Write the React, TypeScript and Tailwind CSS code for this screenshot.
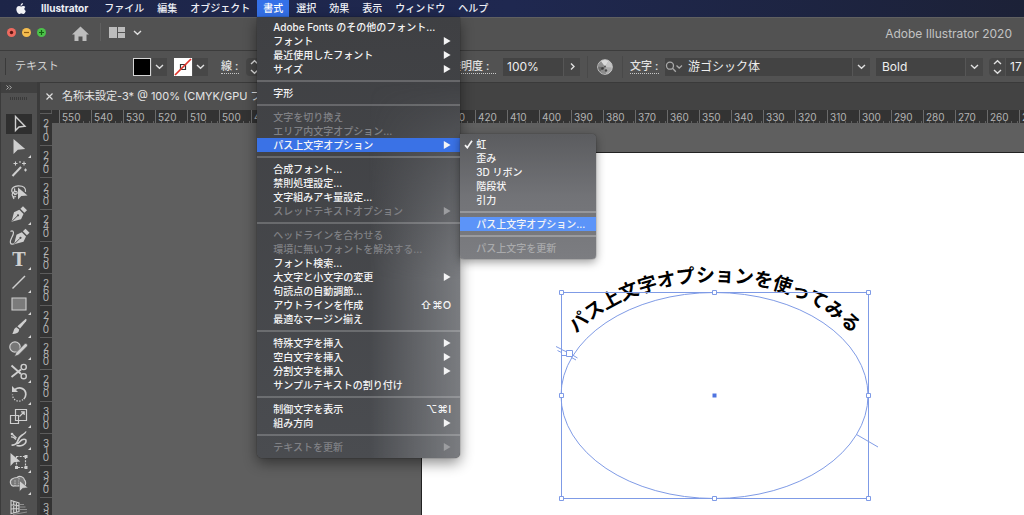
import React from "react";

type Entry = {
  label?: string;
  sub?: boolean;
  off?: boolean;
  active?: boolean;
  keys?: string;
  checked?: boolean;
};

const typeMenu: Entry[] = [
  { label: "Adobe Fonts のその他のフォント..." },
  { label: "フォント", sub: true },
  { label: "最近使用したフォント", sub: true },
  { label: "サイズ", sub: true },
  {},
  { label: "字形" },
  {},
  { label: "文字を切り換え", off: true },
  { label: "エリア内文字オプション...", off: true },
  { label: "パス上文字オプション", sub: true, active: true },
  {},
  { label: "合成フォント..." },
  { label: "禁則処理設定..." },
  { label: "文字組みアキ量設定..." },
  { label: "スレッドテキストオプション", sub: true, off: true },
  {},
  { label: "ヘッドラインを合わせる", off: true },
  { label: "環境に無いフォントを解決する...", off: true },
  { label: "フォント検索..." },
  { label: "大文字と小文字の変更", sub: true },
  { label: "句読点の自動調節..." },
  { label: "アウトラインを作成", keys: "⇧⌘O" },
  { label: "最適なマージン揃え" },
  {},
  { label: "特殊文字を挿入", sub: true },
  { label: "空白文字を挿入", sub: true },
  { label: "分割文字を挿入", sub: true },
  { label: "サンプルテキストの割り付け" },
  {},
  { label: "制御文字を表示", keys: "⌥⌘I" },
  { label: "組み方向", sub: true },
  {},
  { label: "テキストを更新", sub: true, off: true },
];

const pathMenu: Entry[] = [
  { label: "虹", checked: true },
  { label: "歪み" },
  { label: "3D リボン" },
  { label: "階段状" },
  { label: "引力" },
  {},
  { label: "パス上文字オプション...", active: true },
  {},
  { label: "パス上文字を更新", off: true },
];

function MenuRow({ entry, nested }: { entry: Entry; nested?: boolean }) {
  if (!entry.label) {
    return (
      <li role="separator" className="relative flex h-[10px] items-center">
        <span className={nested ? "h-[2px] w-full bg-white/25" : "h-[2px] w-full bg-white/20"} />
      </li>
    );
  }
  const tone = entry.off ? (nested ? "text-[#a9aaac]" : "text-[#808185]") : "text-[#f4f4f5]";
  const fill = entry.active ? (nested ? "bg-[#5c94f8]" : "bg-[#3a72e6]") : "";
  return (
    <li className="relative">
      <button
        type="button"
        disabled={entry.off}
        className={`flex h-[14px] w-full items-center justify-between pr-[9px] text-left ${tone} ${fill}`}
      >
        <span className="flex items-center">
          <span className="flex w-4 justify-center">
            {entry.checked && (
              <svg width="9" height="9" viewBox="0 0 9 9" fill="none" stroke="currentColor" strokeWidth="1.7">
                <path d="M1 5.2 3.3 7.7 8 .8" />
              </svg>
            )}
          </span>
          <span className="whitespace-nowrap">{entry.label}</span>
        </span>
        {entry.sub && (
          <svg width="8" height="8" viewBox="0 0 8 8" fill={entry.off ? "#9c9da0" : "currentColor"}>
            <path d="M.8 0 7.6 4 .8 8z" />
          </svg>
        )}
        {entry.keys && <span className="text-[11px]">{entry.keys}</span>}
      </button>
      {entry.active && !nested && (
        <ul className="absolute top-[-4px] left-full w-[136px] rounded-[4px] rounded-tl-none bg-linear-to-b from-[#5b5c5f] via-[#727377] via-50% to-[#7c7d81] pt-[3px] pb-1 shadow-[0_3px_10px_rgba(0,0,0,0.4),0_0_1px_#222]">
          {pathMenu.map((e, i) => (
            <MenuRow key={i} entry={e} nested />
          ))}
        </ul>
      )}
    </li>
  );
}

function MenuBar() {
  const before = ["ファイル", "編集", "オブジェクト"];
  const after = ["選択", "効果", "表示", "ウィンドウ", "ヘルプ"];
  const item = "h-full px-1.5 whitespace-nowrap";
  return (
    <nav className="relative z-20 flex h-[17px] shrink-0 items-center gap-px bg-linear-to-r from-[#1d2548] via-[#1f2850] via-50% to-[#1c2137] text-[10px] font-medium text-[#eef0f6]">
      <button type="button" aria-label="Apple" className="flex w-[34px] justify-end pr-2">
        <svg width="10" height="12" viewBox="0 0 20 24" fill="#f2f3f7">
          <path d="M13.8 0c.2 1.500-.4 2.900-1.200 3.900-.9 1-2.200 1.800-3.500 1.700-.2-1.400.5-2.900 1.200-3.700C11.200.9 12.700.1 13.800 0zM18.600 8.200c-2.900 1.800-2.500 6.300.9 7.700-.7 2.100-2.500 6-4.900 6.100-1.400 0-1.900-.9-3.900-.9s-2.500.9-3.800.9C3.700 22.100.5 16.400.7 12 .9 8.400 3.300 6.200 6 6.200c1.700 0 3.100 1 4.300 1s2.600-1.200 4.700-1.100c1.500.1 2.800.8 3.600 2.100z" />
        </svg>
      </button>
      <button type="button" className="h-full pr-[9px] pl-1.5 font-bold">Illustrator</button>
      {before.map((t) => (
        <button type="button" key={t} className={item}>{t}</button>
      ))}
      <div className="relative h-full">
        <button type="button" aria-expanded="true" className="h-full bg-[#3470e8] px-1.5 text-white">書式</button>
        <ul className="absolute top-full left-0 w-[203px] rounded-b-[5px] bg-linear-to-b from-[#3f4043] to-[#4a4c50] pt-[3px] pb-1 shadow-[0_5px_14px_rgba(0,0,0,0.45),0_0_1px_#111]">
          <li aria-hidden="true" className="absolute inset-0 rounded-b-[5px] bg-linear-to-r from-transparent from-55% to-[#7a7c80] mask-t-from-40% mask-t-to-85%" />
          {typeMenu.map((e, i) => (
            <MenuRow key={i} entry={e} />
          ))}
        </ul>
      </div>
      {after.map((t) => (
        <button type="button" key={t} className={item}>{t}</button>
      ))}
    </nav>
  );
}

function Chevron({ dir = "down" }: { dir?: "down" | "up" | "right" }) {
  const d = dir === "down" ? "M1 3 4.500 6.200 8 3" : dir === "up" ? "M1 6 4.500 2.800 8 6" : "M3 1.500 6 4.500 3 7.500";
  return (
    <svg width="9" height="9" viewBox="0 0 9 9" fill="none" stroke="#e0e0e0" strokeWidth="1.4">
      <path d={d} />
    </svg>
  );
}

function TitleBar() {
  return (
    <header className="flex h-[33px] shrink-0 items-center border-t border-[#606060] bg-[#525252] pr-3 pl-[7px] pb-1">
      <div className="flex gap-[6px]">
        <button type="button" aria-label="閉じる" className="flex size-[9px] items-center justify-center rounded-full bg-[#ee6a5f]">
          <svg width="9" height="9"><circle cx="4.500" cy="4.500" r="1.700" fill="#5c1410" /></svg>
        </button>
        <button type="button" aria-label="しまう" className="size-[9px] rounded-full bg-[#f5bd4f]">
          <svg width="9" height="9"><path d="M2 4.500h5" stroke="#8d5b12" strokeWidth="1.200" /></svg>
        </button>
        <button type="button" aria-label="拡大" className="size-[9px] rounded-full bg-[#4cc24a]">
          <svg width="9" height="9"><path d="M2 4.500h5M4.500 2v5" stroke="#12640f" strokeWidth="1.200" /></svg>
        </button>
      </div>
      <button type="button" aria-label="ホーム" className="mt-1 ml-[26px]">
        <svg width="17" height="16" viewBox="0 0 17 16" fill="#bdbdbd">
          <path d="M8.500.5 17 8.500h-2.500V15H10.500v-4.500h-4V15h-4V8.500H0z" />
        </svg>
      </button>
      <span className="mr-2 ml-[11px] h-[18px] w-px bg-[#606060]" />
      <button type="button" aria-label="ワークスペース" className="flex items-center gap-2">
        <svg width="16" height="11" viewBox="0 0 16 11" fill="#bdbdbd">
          <path d="M0 0h8v11H0zM9 0h7v5H9zM9 6h7v5H9z" />
        </svg>
        <Chevron />
      </button>
      <h1 className="mt-1 ml-auto text-[12px] text-[#c2c2c2]">Adobe Illustrator 2020</h1>
    </header>
  );
}

function Stepper() {
  return (
    <button type="button" aria-label="増減" className="flex h-[18px] w-4 flex-col items-center justify-center rounded-l-sm bg-[#474747]">
      <Chevron dir="up" />
      <Chevron />
    </button>
  );
}

const caption = "shrink-0 border-b border-dotted border-[#c8c8c8] text-[11px] leading-[14px] font-medium text-[#e2e2e2] whitespace-nowrap";
const arrowBox = "flex h-[18px] shrink-0 items-center justify-center border-l border-[#565656] bg-[#474747]";

function ControlBar() {
  return (
    <section className="flex h-[32px] shrink-0 items-center border-t border-[#3c3c3c] bg-[#525252] pl-[5px]">
      <span className="h-[17px] w-px shrink-0 bg-[#3a3a3a]" />
      <span className="ml-[9px] w-[118px] shrink-0 text-[11px] text-[#d4d4d4]">テキスト</span>
      <button type="button" aria-label="塗り" className="size-[18px] shrink-0 border border-[#d6d6d6] bg-black" />
      <button type="button" aria-label="塗りの一覧" className={`${arrowBox} w-4`}><Chevron /></button>
      <button type="button" aria-label="線" className="ml-[7px] size-[18px] shrink-0 bg-white">
        <svg width="18" height="18" viewBox="0 0 18 18" fill="none">
          <path d="M6.500 6.500h5v5h-5z" stroke="#333" strokeWidth="1.200" />
          <path d="M1 17 17 1" stroke="#e0342b" strokeWidth="1.700" />
        </svg>
      </button>
      <button type="button" aria-label="線の一覧" className={`${arrowBox} w-4`}><Chevron /></button>
      <label htmlFor="stroke" className={`${caption} ml-[13px] w-[18px]`}>線 :</label>
      <div className="ml-[7px] flex w-[200px] shrink-0">
        <Stepper />
        <input id="stroke" className="h-[18px] w-10 bg-[#434343]" />
      </div>
      <label htmlFor="opacity" className={`${caption} ml-1 w-[46px]`}>透明度 :</label>
      <div className="ml-[7px] flex shrink-0">
        <input id="opacity" defaultValue="100%" className="h-[18px] w-[60px] bg-[#434343] pl-1 text-[12px] text-[#eee]" />
        <button type="button" aria-label="不透明度" className={`${arrowBox} w-[17px]`}><Chevron dir="right" /></button>
      </div>
      <span className="ml-[7px] h-[22px] w-px shrink-0 bg-[#494949]" />
      <button type="button" aria-label="オブジェクトを再配色" className="ml-[9px] shrink-0">
        <svg width="16" height="16" viewBox="0 0 16 16">
          <circle cx="8" cy="8" r="7.300" fill="#aaa" stroke="#c8c8c8" />
          <path d="M8 8 4 2.200A7 7 0 0 1 11.500 2z" fill="#d9d9d9" />
          <path d="M8 8 11.500 2A7 7 0 0 1 15 8.500z" fill="#c4c4c4" />
          <path d="M8 8 1 7.500A7 7 0 0 1 4 2.200z" fill="#8e8e8e" />
          <path d="M8 8 3 13A7 7 0 0 1 1 7.500z" fill="#6b6b6b" />
          <path d="M8 8 9 15A7 7 0 0 1 3 13z" fill="#8c8c8c" />
          <circle cx="5.500" cy="9.500" r="1.300" fill="#3c3c3c" /><circle cx="9" cy="11.500" r="1.200" fill="#4a4a4a" />
          <circle cx="8" cy="7.500" r="1" fill="#555" />
        </svg>
      </button>
      <span className="ml-[9px] h-[22px] w-px shrink-0 bg-[#494949]" />
      <label htmlFor="family" className={`${caption} ml-[7px] w-[29px]`}>文字 :</label>
      <div className="ml-[6px] flex min-w-0 flex-1 items-center">
        <span className="flex h-[18px] shrink-0 items-center bg-[#434343]">
          <svg width="18" height="12" viewBox="0 0 18 12" fill="none" stroke="#a9a9a9" strokeWidth="1.300">
            <circle cx="5" cy="4.700" r="3.500" />
            <path d="M7.500 7.300 10.800 10.800M11.500 4.500 14.200 7 17 4.500" />
          </svg>
        </span>
        <input id="family" defaultValue="游ゴシック体" className="h-[18px] w-full min-w-0 bg-[#434343] pl-[5px] text-[12px] text-[#eee]" />
        <button type="button" aria-label="フォント一覧" className={`${arrowBox} w-[18px]`}><Chevron /></button>
      </div>
      <div className="relative ml-[6px] flex w-[107px] shrink-0">
        <select aria-label="フォントスタイル" className="h-[18px] w-full appearance-none bg-[#434343] pl-[6px] text-[12px] text-[#eee]">
          <option>Bold</option>
        </select>
        <span className={`${arrowBox} pointer-events-none absolute right-0 w-[18px]`}><Chevron /></span>
      </div>
      <div className="ml-[6px] flex w-[35px] shrink-0 gap-px overflow-hidden">
        <span className="shrink-0"><Stepper /></span>
        <input aria-label="フォントサイズ" defaultValue="17" className="h-[18px] w-10 shrink-0 bg-[#434343] pl-1 text-[12px] text-[#eee]" />
      </div>
    </section>
  );
}

const ink = "#cfcfcf";

const nib = (
  <g>
    <path d="M3.500 18.800 6 9.300 11.300 6.800 15.500 11 13 16.300z" fill={ink} />
    <path d="M12.400 5.800 15 3.200 19 7.200 16.400 9.800z" fill={ink} />
    <path d="M4 18.300 9.500 12.800" stroke="#505050" />
    <circle cx="10" cy="12.300" r="1.100" fill="#505050" />
  </g>
);

const tools: { name: string; flyout?: boolean; art: React.ReactNode }[] = [
  { name: "選択ツール", art: <path d="M7.500 3.500V17.500L11 14l6-.8z" fill="none" stroke={ink} strokeWidth="1.400" /> },
  { name: "ダイレクト選択ツール", flyout: true, art: <path d="M5.500 3V18L9.800 13.800l7.400-.7z" fill={ink} /> },
  {
    name: "自動選択ツール",
    art: (
      <g stroke={ink} fill="none">
        <path d="M4.500 18 13 9" strokeWidth="2" />
        <path d="M7.500 3.500v4M5.500 5.500h4M16 3.500v4M14 5.500h4M17.500 10.500v3M16 12h3M12 3v2" strokeWidth="1.100" />
      </g>
    ),
  },
  {
    name: "なげなわツール",
    art: (
      <g>
        <path d="M8 13C2 12.500 2 5.500 10 4.800c6-.3 8 2.500 7.500 6M8 15.500c-3 1-4.500-1-3.500-3s3.500-3 4.500-1.500-1.500 3-3 2.500M4.800 15.500 6 18M7 7.500c-1 1.200-.5 3 1 3.500" fill="none" stroke={ink} strokeWidth="1.200" />
        <path d="M10 6.500v12l3.300-3.400 6.200-.6z" fill={ink} />
      </g>
    ),
  },
  { name: "ペンツール", flyout: true, art: nib },
  {
    name: "曲線ツール",
    art: (
      <g>
        <path d="M2.500 5.500c2-1.500 3.500 0 2.800 2.500C4.500 11 1.500 14 2.500 17c.5 1.500 2.500 1.500 4 .5" fill="none" stroke={ink} strokeWidth="1.200" />
        <g transform="translate(2.500 -.5)">{nib}</g>
      </g>
    ),
  },
  {
    name: "文字ツール",
    flyout: true,
    art: <text x="11" y="17.500" textAnchor="middle" fontFamily="DejaVu Serif, serif" fontWeight="bold" fontSize="18" fill={ink}>T</text>,
  },
  { name: "直線ツール", flyout: true, art: <path d="M4.500 17.500 17 5" stroke={ink} strokeWidth="1.400" /> },
  { name: "長方形ツール", flyout: true, art: <path d="M4 5h14v12H4z" fill="#7b7b7b" stroke={ink} strokeWidth="1.100" /> },
  {
    name: "ブラシツール",
    flyout: true,
    art: (
      <g fill={ink}>
        <path d="M17.800 2.800c1 .6.900 1.500.3 2.400L12 12.600l-2.600-2.300z" />
        <path d="M8.500 11.200 11.200 13.600c-.2 3.600-3 4.600-7.200 4.200 2.200-1.500 1.200-5.800 4.500-6.600z" />
      </g>
    ),
  },
  {
    name: "Shaperツール",
    flyout: true,
    art: (
      <g>
        <circle cx="7" cy="9" r="5.200" fill="#777" stroke={ink} strokeWidth="1.200" />
        <path d="M6.500 18.500 8 14.500 17 5.500c1-.8 3.300 1.300 2.500 2.500L10.500 17z" fill={ink} stroke="#505050" strokeWidth=".7" />
      </g>
    ),
  },
  {
    name: "はさみツール",
    flyout: true,
    art: (
      <g fill="none" stroke={ink} strokeWidth="1.400">
        <path d="M3.500 4.500 13 13M3.500 16 13 8.500" strokeWidth="1.900" />
        <circle cx="15.700" cy="6" r="2.600" />
        <circle cx="15.700" cy="15.200" r="2.600" />
      </g>
    ),
  },
  {
    name: "回転ツール",
    flyout: true,
    art: (
      <g fill="none" stroke={ink}>
        <path d="M7 6.500c5-3.500 11-.5 10.800 5-.1 2-.8 3.300-2 4.500" strokeWidth="1.700" />
        <path d="M15 16.500c-4 3.500-10.500 1-10.500-5" strokeWidth="1.300" strokeDasharray="1.300 1.500" />
        <path d="M4 3v6h6z" fill={ink} stroke="none" />
      </g>
    ),
  },
  {
    name: "拡大・縮小ツール",
    flyout: true,
    art: (
      <g fill="none" stroke={ink} strokeWidth="1.200">
        <path d="M7.500 3.500H18.500V14.500H7.500zM2.500 9.500h8v8h-8z" />
        <path d="M11.500 10.500 16 6M13 5.800h3.200V9" />
      </g>
    ),
  },
  {
    name: "線幅ツール",
    flyout: true,
    art: (
      <g fill="none" stroke={ink}>
        <path d="M3.500 5.500 8.500 10M3 9c2.500-.5 3.500 1 5 2.500" strokeWidth="1.300" />
        <path d="M3.500 17c3.500.5 5-1 6-3.500s1.500-4.500 4-6 4.500-3 4-4" strokeWidth="1.700" />
        <path d="M8.500 17.500c4 1 9-.5 9.500-4s-4-2.500-5.500-.5-3 3-4.500 2" strokeWidth="1.600" />
        <circle cx="4" cy="6" r="1.300" fill={ink} stroke="none" />
      </g>
    ),
  },
  {
    name: "自由変形ツール",
    flyout: true,
    art: (
      <g>
        <path d="M8.500 5.500h9v11h-9z" fill="none" stroke={ink} strokeWidth="1.200" strokeDasharray="2 1.200" />
        <path d="M16.500 4h3v3h-3zM16.500 15h3v3h-3zM7 15h3v3H7z" fill={ink} />
        <path d="M2.500 2v13L6 11.200l6.300-.8z" fill={ink} />
      </g>
    ),
  },
  {
    name: "シェイプ形成ツール",
    flyout: true,
    art: (
      <g>
        <path d="M9 4.500c3-2.500 7-.5 7.500 2.500 1.500 1 1.500 5 0 6H6.500c-4 1-5.500-5-2.500-7 1.500-1 3.500-1.500 5-1.500z" fill="#777" stroke={ink} strokeWidth="1.200" />
        <path d="M7 13V6.500M11 13V5" stroke={ink} strokeDasharray="1.200 1" />
        <path d="M11.500 7.500v11l3.200-3.200 5.300-.6z" fill={ink} stroke="#505050" strokeWidth=".5" />
      </g>
    ),
  },
  {
    name: "遠近グリッドツール",
    flyout: true,
    art: (
      <g fill="none" stroke={ink} strokeWidth="1.100">
        <path d="M3 4.500 11 7v8.500L3 17.500zM5.700 5.500v11.300M8.400 6.300v9.900M3 8.800l8 1M3 13l8-.5" />
        <path d="M12 8.500h4M12 11h5.500M12 13.500h7M5 18.500l14-2.500" strokeWidth=".9" stroke="#969696" />
      </g>
    ),
  },
];

function Toolbar() {
  return (
    <aside className="w-[37px] shrink-0 overflow-hidden border-l border-[#3b3b3b] bg-[#505050]">
      <div className="flex h-[11px] items-center bg-[#404040] pl-[5px]">
        <svg width="6" height="5" viewBox="0 0 6 5" fill="none" stroke="#bbb" strokeWidth=".9">
          <path d="M.5.500 2.500 2.500.5 4.500M3.300.5 5.300 2.500 3.300 4.500" />
        </svg>
      </div>
      <div className="mx-auto mt-1 mb-[13px] h-[3px] w-[18px] bg-[repeating-linear-gradient(90deg,#3a3a3a_0_1px,#505050_1px_2px)]" />
      <div className="flex flex-col items-center">
        {tools.map((t, i) => (
          <button type="button" key={t.name} aria-label={t.name} className="relative flex h-[22px] w-[24px] shrink-0 items-center justify-center even:h-[23px]">
            <span className={i === 0 ? "flex h-[20px] w-[26px] shrink-0 items-center justify-center bg-[#2f2f2f]" : "flex"}>
              <svg width="22" height="22" viewBox="0 0 22 22" className="shrink-0">{t.art}</svg>
            </span>
            {t.flyout && (
              <svg width="3" height="3" viewBox="0 0 3 3" className="absolute right-0 bottom-0" fill="#d8d8d8"><path d="M3 0v3H0z" /></svg>
            )}
          </button>
        ))}
      </div>
    </aside>
  );
}

const across = Array.from({ length: 31 }, (_, i) => 550 - i * 10);
const down = Array.from({ length: 13 }, (_, i) => 210 + i * 10);
const minorX = "bg-[repeating-linear-gradient(90deg,transparent_0_5px,#606060_5px_6px)] bg-[length:100%_2px] bg-bottom bg-no-repeat";

function Artwork() {
  const handles: [number, number][] = [
    [140, 140], [293, 140], [447, 140],
    [140, 243], [447, 243],
    [140, 346], [293, 346], [447, 346],
  ];
  return (
    <svg width="603" height="363" viewBox="0 0 603 363" fill="none" stroke="#7f9be6">
      <path id="arc" d="M129.500 243.500A164 114 0 0 1 457.500 243.500" stroke="none" />
      <text fontFamily="'Noto Sans CJK JP', sans-serif" fontSize="19" fontWeight="700" fill="#000" stroke="none" textAnchor="middle">
        <textPath href="#arc" startOffset="50%">パス上文字オプションを使ってみる</textPath>
      </text>
      <ellipse cx="293.500" cy="243.500" rx="153.500" ry="103" />
      <path d="M140.500 140.500h307v206h-307z" />
      {handles.map(([x, y]) => (
        <path key={`${x}-${y}`} d={`M${x - 1.5} ${y - 1.5}h4v4h-4z`} fill="#fff" />
      ))}
      <path d="M291.500 241.500h4v4h-4z" fill="#4f74e0" stroke="none" />
      <path d="M435.500 282.500 457 295M135 194.500l5 2.500M136.500 198.500l4 2M140.500 197.500 146 200M140.500 203.500h5M151.500 203l5 3M150.500 205.500l4.500 2.500" />
      <path d="M145.500 198.500h6v6h-6z" fill="#fff" />
    </svg>
  );
}

function DocumentView() {
  return (
    <main className="ml-[3px] flex min-w-0 flex-1 flex-col">
      <div className="flex h-[28px] shrink-0 border-t border-[#3a3a3a] bg-[#434343]">
        <div className="flex w-[270px] items-center gap-[9px] bg-[#505050] pl-[6px]">
          <button type="button" aria-label="タブを閉じる">
            <svg width="7" height="7" viewBox="0 0 7 7" stroke="#ddd" strokeWidth="1.200"><path d="M.5.500 6.500 6.500M6.500.5.5 6.500" /></svg>
          </button>
          <span className="text-[11px] whitespace-nowrap text-[#e4e4e4]">名称未設定-3* @ 100% (CMYK/GPU プレビュー)</span>
        </div>
      </div>
      <div className="flex h-[13px] shrink-0 overflow-hidden bg-[#333]">
        <span className="h-full w-[12px] shrink-0 border-r border-[#555]" />
        <span className="h-full w-[7px] shrink-0" />
        {across.map((n) => (
          <span key={n} className={`w-8 shrink-0 border-l border-[#6a6a6a] pl-[2px] text-[10px] leading-[14px] text-[#b4b4b4] ${minorX}`}>{n}</span>
        ))}
      </div>
      <div className="flex min-h-0 flex-1">
        <div className="-mt-[10px] w-[12px] shrink-0 overflow-hidden">
          <div className="flex flex-col bg-[#333]">
            {down.map((n) => (
              <span key={n} className="flex h-8 shrink-0 flex-col items-center border-t border-[#5c5c5c] bg-[#333] pt-[6px] text-[10px] text-[#b4b4b4]">
                {String(n).split("").map((d, i) => (
                  <span key={i} className="h-[7px] leading-[7px]">{d}</span>
                ))}
              </span>
            ))}
          </div>
        </div>
        <div className="relative min-w-0 flex-1 overflow-hidden bg-[#5f5f5f]">
          <div className="absolute top-[29px] right-0 bottom-0 left-[369px] border-t border-l border-[#222] bg-white">
            <div className="-mt-px -ml-px">
              <Artwork />
            </div>
          </div>
        </div>
      </div>
    </main>
  );
}

export default function App() {
  return (
    <div className="flex h-screen flex-col overflow-hidden bg-[#3b3b3b] font-['Inter','Noto_Sans_CJK_JP',sans-serif]">
      <MenuBar />
      <TitleBar />
      <ControlBar />
      <div className="flex min-h-0 flex-1">
        <Toolbar />
        <DocumentView />
      </div>
    </div>
  );
}
